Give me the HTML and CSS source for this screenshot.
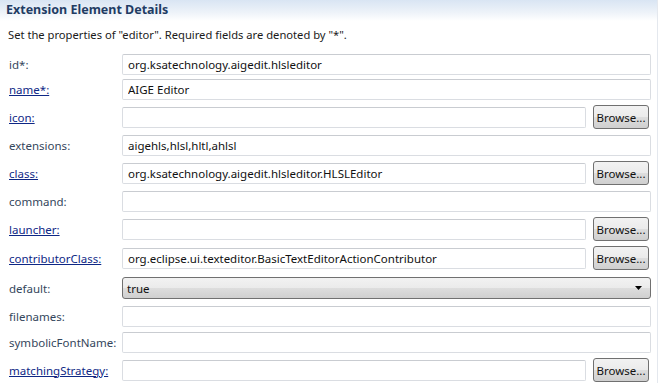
FILE: index.html
```html
<!DOCTYPE html>
<html lang="en">
<head>
    <meta charset="UTF-8">
    <title>Extension Element Details</title>
    <link rel="stylesheet" href="styles.css">
</head>
<body>
    <div class="section">
        <div class="section-title">Extension Element Details</div>
        <p class="description">Set the properties of "editor". Required fields are denoted by "*".</p>

        <div class="form">
            <div class="row row-first">
                <span class="label">id*:</span>
                <input class="field" type="text" value="org.ksatechnology.aigedit.hlsleditor">
            </div>
            <div class="row row-second">
                <a class="label link" href="#">name*:</a>
                <input class="field" type="text" value="AIGE Editor">
            </div>
            <div class="row">
                <a class="label link" href="#">icon:</a>
                <input class="field" type="text" value="">
                <button class="browse">Browse...</button>
            </div>
            <div class="row">
                <span class="label">extensions:</span>
                <input class="field" type="text" value="aigehls,hlsl,hltl,ahlsl">
            </div>
            <div class="row">
                <a class="label link" href="#">class:</a>
                <input class="field" type="text" value="org.ksatechnology.aigedit.hlsleditor.HLSLEditor">
                <button class="browse">Browse...</button>
            </div>
            <div class="row">
                <span class="label">command:</span>
                <input class="field" type="text" value="">
            </div>
            <div class="row">
                <a class="label link" href="#">launcher:</a>
                <input class="field" type="text" value="">
                <button class="browse">Browse...</button>
            </div>
            <div class="row row-tall">
                <a class="label link" href="#">contributorClass:</a>
                <input class="field" type="text" value="org.eclipse.ui.texteditor.BasicTextEditorActionContributor">
                <button class="browse">Browse...</button>
            </div>
            <div class="row row-combo">
                <span class="label">default:</span>
                <div class="combo">
                    <span>true</span>
                    <svg class="arrow" width="7" height="4" viewBox="0 0 7 4"><path d="M0 0h7L3.5 4z" fill="#000"/></svg>
                </div>
            </div>
            <div class="row row-short">
                <span class="label">filenames:</span>
                <input class="field" type="text" value="">
            </div>
            <div class="row row-mid">
                <span class="label">symbolicFontName:</span>
                <input class="field" type="text" value="">
            </div>
            <div class="row">
                <a class="label link" href="#">matchingStrategy:</a>
                <input class="field" type="text" value="">
                <button class="browse">Browse...</button>
            </div>
        </div>
    </div>
</body>
</html>
```

FILE: styles.css
```css
body {
    margin: 0;
    background: #fff;
    font-family: "Noto Sans", "Open Sans", sans-serif;
    font-size: 11.5px;
    color: #1e1e1e;
    overflow: hidden;
}
.section {
    width: 657px;
    border-right: 1px solid #e4e8ee;
    min-height: 383px;
}
.section-title {
    height: 21px;
    line-height: 20px;
    padding-left: 6px;
    font-weight: bold;
    font-size: 12.5px;
    color: #1f3c64;
    background: linear-gradient(to bottom, #d9e5f3 0%, #eef3f9 60%, #fff 100%);
}
.description {
    margin: 3px 0 0 8px;
    height: 24px;
    line-height: 22px;
    font-size: 11.2px;
    color: #1a1a1a;
}
.form {
    padding: 4px 0 0 9px;
}
.row {
    display: flex;
    align-items: center;
    height: 28px;
}
.row-first { height: 24px; }
.row-second { height: 27px; }
.row-tall { height: 30px; }
.row-combo { height: 30px; }
.row-short { height: 26px; }
.row-mid { height: 27px; }
.label {
    width: 113px;
    flex: none;
    color: #34465c;
}
.link {
    color: #0e2785;
    text-decoration: underline;
}
.field {
    flex: 1;
    height: 21px;
    box-sizing: border-box;
    margin: 0 6px 0 0;
    padding: 0 5px;
    border: 1px solid #dadde2;
    border-top-color: #c9ccd1;
    border-radius: 2px;
    font: inherit;
    color: #111;
    background: #fff;
    outline: none;
}
.browse {
    flex: none;
    width: 56px;
    height: 24px;
    margin: 0 8px 0 1px;
    padding: 0;
    border: 1px solid #707070;
    border-radius: 3px;
    background: linear-gradient(to bottom, #f2f2f2 0%, #ebebeb 48%, #dddddd 52%, #cfcfcf 100%);
    font: inherit;
    color: #111;
}
.combo {
    flex: 1;
    height: 22px;
    box-sizing: border-box;
    margin-right: 6px;
    padding: 0 8px 0 4px;
    border: 1px solid #707070;
    border-radius: 3px;
    background: linear-gradient(to bottom, #f2f2f2 0%, #ebebeb 48%, #dddddd 52%, #cfcfcf 100%);
    display: flex;
    align-items: center;
    justify-content: space-between;
    color: #111;
}
```
